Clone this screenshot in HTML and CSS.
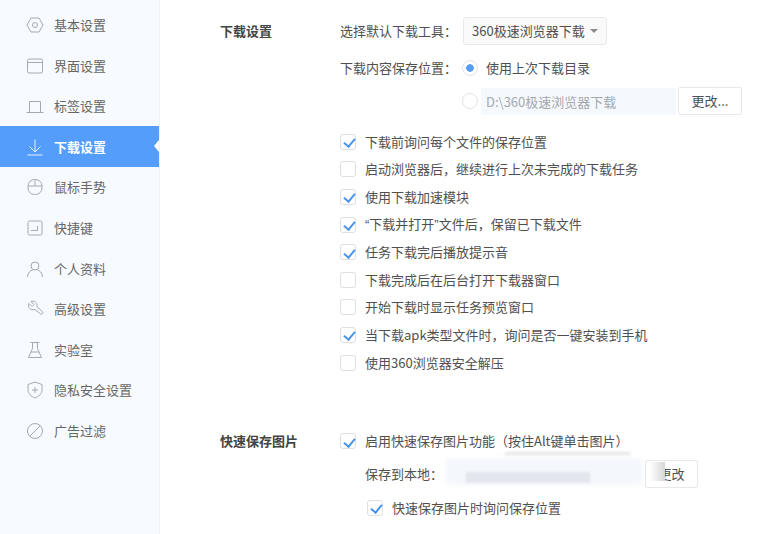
FILE: index.html
```html
<!DOCTYPE html>
<html lang="zh-CN">
<head>
<meta charset="utf-8">
<title>下载设置</title>
<link rel="stylesheet" href="styles.css">
</head>
<body>
<div class="app">
  <nav class="side">
    <a class="item"><svg class="ico" viewBox="0 0 18 18"><path d="M5 2h8l4 7-4 7H5L1 9z"/><circle cx="9" cy="9" r="2.500"/></svg><span>基本设置</span></a>
    <a class="item"><svg class="ico" viewBox="0 0 18 18"><rect x="1.500" y="2" width="15" height="14" rx="1.500"/><path d="M1.500 5.500h15"/></svg><span>界面设置</span></a>
    <a class="item"><svg class="ico" viewBox="0 0 18 18"><path d="M3.500 15V4.500h11V15M.5 15.500h17"/></svg><span>标签设置</span></a>
    <a class="item active"><svg class="ico" viewBox="0 0 18 18"><path d="M9 1.500v12M3.500 8.500L9 14l5.500-5.500M1.500 17h15"/></svg><span>下载设置</span></a>
    <a class="item"><svg class="ico" viewBox="0 0 18 18"><rect x="2" y="1.500" width="14" height="15" rx="6.500"/><path d="M2 8h14M9 1.500V8"/></svg><span>鼠标手势</span></a>
    <a class="item"><svg class="ico" viewBox="0 0 18 18"><rect x="2" y="2" width="14" height="14" rx="1.500"/><path d="M5 11.500h6.500V7"/></svg><span>快捷键</span></a>
    <a class="item"><svg class="ico" viewBox="0 0 18 18"><circle cx="9" cy="6" r="4"/><path d="M1.500 17c0-4 3-6.500 5-7M16.500 17c0-4-3-6.500-5-7"/></svg><span>个人资料</span></a>
    <a class="item"><svg class="ico" viewBox="0 0 18 18"><path d="M3 3.500l3 3 2-2-3-3c2.500-1 5.500.5 6 3 .1.800 0 1.500-.2 2l6 5.500c.8.800-1.200 3-2 2.200L9 9.500c-2.500 1-6-.5-6.500-3-.1-1 0-2 .5-3z"/></svg><span>高级设置</span></a>
    <a class="item"><svg class="ico" viewBox="0 0 18 18"><path d="M4.500 1.500h9M6.500 1.500v6L2.500 16.500h13L11.500 7.500v-6M5 11h8"/></svg><span>实验室</span></a>
    <a class="item"><svg class="ico" viewBox="0 0 18 18"><path d="M9 1l7 2.500V9c0 3.500-3 6.500-7 8-4-1.500-7-4.500-7-8V3.500zM9 6v6M6 9h6"/></svg><span>隐私安全设置</span></a>
    <a class="item"><svg class="ico" viewBox="0 0 18 18"><circle cx="9" cy="9" r="7.500"/><path d="M3.800 14.200L14.200 3.800"/></svg><span>广告过滤</span></a>
  </nav>
  <main class="main">
    <section class="section first">
      <h2 class="title">下载设置</h2>
      <div class="body">
        <div class="row tool">
          <span class="label">选择默认下载工具：</span>
          <div class="select"><span>360极速浏览器下载</span><i class="caret"></i></div>
        </div>
        <div class="row save">
          <span class="label">下载内容保存位置：</span>
          <i class="radio on"></i><span class="text">使用上次下载目录</span>
        </div>
        <div class="row path">
          <i class="radio dim"></i>
          <div class="input">D:\360极速浏览器下载</div>
          <button class="btn">更改...</button>
        </div>
        <ul class="checks">
          <li><i class="check on"></i><span>下载前询问每个文件的保存位置</span></li>
          <li><i class="check"></i><span>启动浏览器后，继续进行上次未完成的下载任务</span></li>
          <li><i class="check on"></i><span>使用下载加速模块</span></li>
          <li><i class="check on"></i><span><span class="latin">“</span>下载并打开<span class="latin">”</span>文件后，保留已下载文件</span></li>
          <li><i class="check on"></i><span>任务下载完后播放提示音</span></li>
          <li><i class="check"></i><span>下载完成后在后台打开下载器窗口</span></li>
          <li><i class="check"></i><span>开始下载时显示任务预览窗口</span></li>
          <li><i class="check on"></i><span>当下载apk类型文件时，询问是否一键安装到手机</span></li>
          <li><i class="check"></i><span>使用360浏览器安全解压</span></li>
        </ul>
      </div>
    </section>
    <section class="section second">
      <h2 class="title">快速保存图片</h2>
      <div class="body">
        <div class="line"><i class="check on"></i><span>启用快速保存图片功能（按住Alt键单击图片）</span></div>
        <div class="local">
          <span class="label">保存到本地：</span>
          <button class="btn small">更改</button>
          <i class="smear pale"></i><i class="smear top"></i><i class="smear mid"></i><i class="smear edge"></i>
        </div>
        <div class="line sub"><i class="check on"></i><span>快速保存图片时询问保存位置</span></div>
      </div>
    </section>
  </main>
</div>
</body>
</html>
```
FILE: styles.css
```css
* { box-sizing: border-box; }
html, body { margin: 0; height: 100%; }
body {
  background: #fff;
  color: #505050;
  font: 13px/20px "Noto Sans CJK SC", "Liberation Sans", sans-serif;
  overflow: hidden;
}
.app { display: flex; height: 534px; }
.side {
  width: 160px;
  flex: none;
  padding-top: 4.650px;
  background: #f7fbff;
  border-right: 1px solid #eef2f7;
}
.item {
  position: relative;
  display: flex;
  align-items: center;
  gap: 10px;
  height: 40.600px;
  padding-left: 26px;
  color: #666;
}
.ico {
  width: 18px;
  height: 18px;
  flex: none;
  fill: none;
  stroke: #a6a9ad;
  stroke-width: 1;
}
.item.active {
  width: 159px;
  background: #559dfb;
  color: #fff;
  font-weight: 700;
}
.item.active .ico { stroke: #e4f0ff; }
.item.active::after {
  content: "";
  position: absolute;
  right: 0;
  top: 14px;
  border: 6px solid transparent;
  border-left: 0;
  border-right: 5px solid #fff;
}
.main { flex: 1; padding-left: 60px; }
.section { display: flex; }
.first { padding-top: 17px; }
.second { margin-top: 51px; }
.title {
  width: 120px;
  flex: none;
  margin: 0;
  color: #444;
  font-size: 13px;
  font-weight: 700;
}
.first .title { padding-top: 4px; }
.row { display: flex; align-items: center; }
.tool { height: 28px; }
.select {
  display: flex;
  align-items: center;
  justify-content: space-between;
  width: 144px;
  height: 28px;
  margin-left: 6px;
  padding: 0 8px;
  border: 1px solid #e9e9e9;
  border-radius: 3px;
  background: #fafafa;
}
.caret {
  border: 4px solid transparent;
  border-top: 4px solid #8b8b8b;
  border-bottom: 0;
}
.save { margin-top: 13px; height: 20px; }
.text { margin-left: 8px; }
.radio {
  width: 16px;
  height: 16px;
  flex: none;
  border: 1px solid #dfe3e8;
  border-radius: 50%;
  background: #fff;
}
.save .radio { margin-left: 5px; }
.radio.on { background: radial-gradient(circle, #559dfb 0 3.500px, #fff 4px); }
.radio.dim { margin-left: 122px; }
.path { margin-top: 9px; height: 28px; }
.input {
  width: 195px;
  height: 27px;
  margin-left: 3px;
  padding-left: 5px;
  background: #f5f9fd;
  color: #a5a8ac;
  line-height: 27px;
}
.btn {
  width: 64px;
  height: 28px;
  margin-left: 2px;
  padding: 0;
  border: 1px solid #e8e8e8;
  border-radius: 2px;
  background: #fff;
  color: #505050;
  font: inherit;
}
.checks { margin: 13px 0 0; padding: 0; list-style: none; }
.checks li, .line {
  display: flex;
  align-items: center;
  gap: 9px;
  height: 27.600px;
}
.latin { font-family: "Liberation Sans", sans-serif; }
.check {
  position: relative;
  width: 16px;
  height: 16px;
  flex: none;
  border: 1px solid #dcdfe3;
  border-radius: 3px;
  background: #fff;
}
.check.on::after {
  content: "";
  position: absolute;
  left: 4.500px;
  top: 1.500px;
  width: 5px;
  height: 9px;
  border: solid #4a94e8;
  border-width: 0 2px 2px 0;
  transform: rotate(40deg);
}
.second .title { line-height: 27.600px; }
.local {
  position: relative;
  display: flex;
  align-items: center;
  height: 33px;
  margin-top: 3px;
  padding-left: 25px;
}
.local .btn {
  position: absolute;
  left: 305px;
  top: 2px;
  width: 53px;
  margin: 0;
}
.smear { position: absolute; display: block; }
.smear.pale {
  left: 106px;
  top: 0;
  width: 196px;
  height: 27px;
  background: #f4f7fb;
  filter: blur(2px);
}
.smear.top {
  left: 165px;
  top: -6px;
  width: 125px;
  height: 3px;
  background: #e4e4e4;
  filter: blur(1.500px);
}
.smear.mid {
  left: 126px;
  top: 14px;
  width: 124px;
  height: 11px;
  background: #e4e6ed;
  filter: blur(1px);
}
.smear.edge {
  left: 310px;
  top: 4px;
  width: 15px;
  height: 19px;
  background: linear-gradient(to right, #fff, #d6d6d6);
}
.sub { margin-top: 3px; padding-left: 27px; }
```
